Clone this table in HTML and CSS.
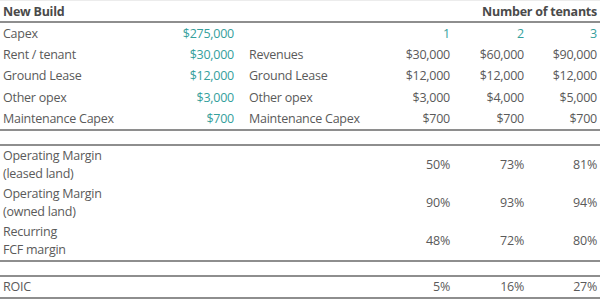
FILE: index.html
```html
<!DOCTYPE html>
<html lang="en">
<head>
  <meta charset="UTF-8">
  <title>New Build</title>
  <link rel="stylesheet" href="styles.css">
</head>
<body>
  <table class="grid top">
    <colgroup>
      <col class="c-label"><col class="c-val"><col class="c-label2">
      <col class="c-n1"><col class="c-n2"><col class="c-n3">
    </colgroup>
    <thead>
      <tr>
        <th class="left" colspan="3">New Build</th>
        <th class="right" colspan="3">Number of tenants</th>
      </tr>
    </thead>
    <tbody>
      <tr>
        <td>Capex</td><td class="num input">$275,000</td><td></td>
        <td class="num input">1</td><td class="num input">2</td><td class="num input">3</td>
      </tr>
      <tr>
        <td>Rent / tenant</td><td class="num input">$30,000</td><td class="label2">Revenues</td>
        <td class="num">$30,000</td><td class="num">$60,000</td><td class="num">$90,000</td>
      </tr>
      <tr>
        <td>Ground Lease</td><td class="num input">$12,000</td><td class="label2">Ground Lease</td>
        <td class="num">$12,000</td><td class="num">$12,000</td><td class="num">$12,000</td>
      </tr>
      <tr>
        <td>Other opex</td><td class="num input">$3,000</td><td class="label2">Other opex</td>
        <td class="num">$3,000</td><td class="num">$4,000</td><td class="num">$5,000</td>
      </tr>
      <tr>
        <td>Maintenance Capex</td><td class="num input">$700</td><td class="label2">Maintenance Capex</td>
        <td class="num">$700</td><td class="num">$700</td><td class="num">$700</td>
      </tr>
    </tbody>
  </table>

  <table class="grid margins">
    <colgroup>
      <col class="c-label"><col class="c-val"><col class="c-label2">
      <col class="c-n1"><col class="c-n2"><col class="c-n3">
    </colgroup>
    <tbody>
      <tr>
        <td colspan="3">Operating Margin<br>(leased land)</td>
        <td class="num">50%</td><td class="num">73%</td><td class="num">81%</td>
      </tr>
      <tr>
        <td colspan="3">Operating Margin<br>(owned land)</td>
        <td class="num">90%</td><td class="num">93%</td><td class="num">94%</td>
      </tr>
      <tr>
        <td colspan="3">Recurring<br>FCF margin</td>
        <td class="num">48%</td><td class="num">72%</td><td class="num">80%</td>
      </tr>
    </tbody>
  </table>

  <table class="grid roic">
    <colgroup>
      <col class="c-label"><col class="c-val"><col class="c-label2">
      <col class="c-n1"><col class="c-n2"><col class="c-n3">
    </colgroup>
    <tbody>
      <tr>
        <td colspan="3">ROIC</td>
        <td class="num">5%</td><td class="num">16%</td><td class="num">27%</td>
      </tr>
    </tbody>
  </table>
</body>
</html>
```

FILE: styles.css
```css
body {
  margin: 0;
  background: #ffffff;
  font-family: "Open Sans", "Noto Sans", Arial, sans-serif;
  font-size: 12.5px;
  letter-spacing: -0.25px;
  color: #5a5a5a;
}

.grid {
  width: 600px;
  border-collapse: collapse;
  table-layout: fixed;
}

.c-label { width: 170px; }
.c-val { width: 67px; }
.c-label2 { width: 140px; }
.c-n1 { width: 76px; }
.c-n2 { width: 74px; }
.c-n3 { width: 73px; }

.grid th,
.grid td {
  padding: 0 3px;
  white-space: nowrap;
  font-weight: normal;
}

.grid th {
  height: 20px;
  font-weight: bold;
  color: #4a4a4a;
}

.top {
  border-top: 1px solid #ececec;
  border-bottom: 2px solid #8e8e8e;
}

.top thead tr {
  border-bottom: 2px solid #8e8e8e;
}

.top tbody td {
  height: 21.2px;
}

.left { text-align: left; }
.right { text-align: right; }

.num { text-align: right; }

.input { color: #35a09c; }

.grid td.label2 { padding-left: 12px; }

.margins {
  margin-top: 13px;
  border-top: 2px solid #8e8e8e;
  border-bottom: 2px solid #8e8e8e;
}

.margins td {
  height: 38px;
  line-height: 17.5px;
}

.roic {
  margin-top: 13px;
  border-top: 2px solid #8e8e8e;
  border-bottom: 2px solid #8e8e8e;
}

.roic td {
  height: 20px;
}
```
